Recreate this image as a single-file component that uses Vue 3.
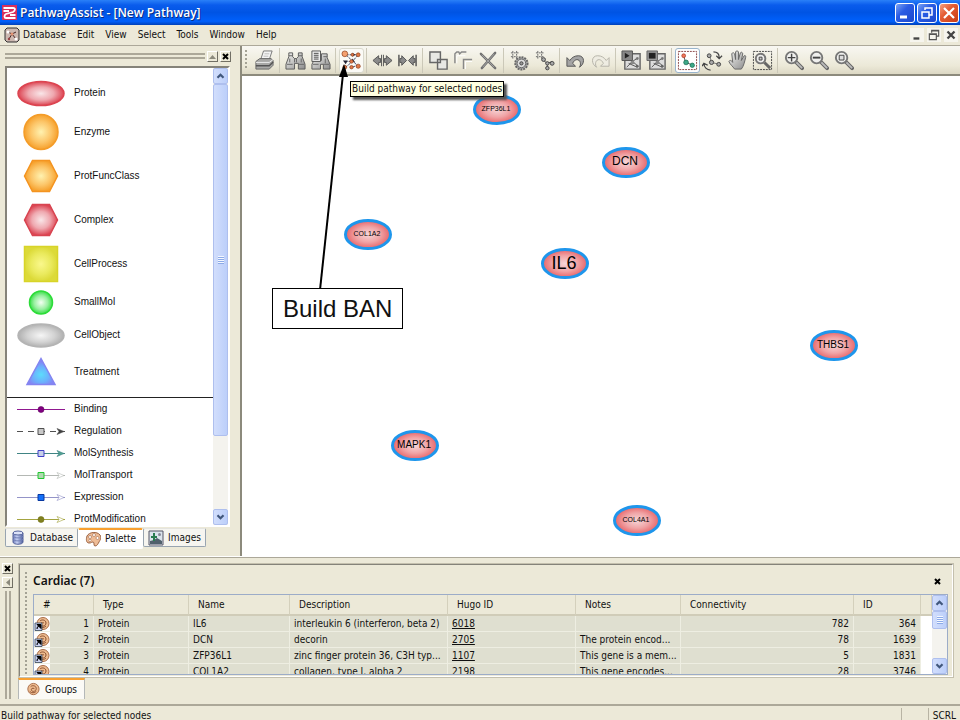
<template>
  <div class="window">
    <svg class="defs" width="0" height="0" aria-hidden="true">
      <defs>
        <radialGradient id="g-red"><stop offset="0" stop-color="#f9e6e8" /><stop offset=".55" stop-color="#efa9b0" /><stop offset="1" stop-color="#dc4452" /></radialGradient>
        <radialGradient id="g-node"><stop offset="0" stop-color="#f6d6d8" /><stop offset=".55" stop-color="#f0a4a6" /><stop offset="1" stop-color="#e86468" /></radialGradient>
        <radialGradient id="g-orange"><stop offset="0" stop-color="#fff2b0" /><stop offset=".6" stop-color="#fcc568" /><stop offset="1" stop-color="#f6a02c" /></radialGradient>
        <radialGradient id="g-yellow"><stop offset="0" stop-color="#faf88c" /><stop offset=".6" stop-color="#eaea5e" /><stop offset="1" stop-color="#dcda38" /></radialGradient>
        <radialGradient id="g-green"><stop offset="0" stop-color="#f4fff2" /><stop offset=".6" stop-color="#98f0a0" /><stop offset="1" stop-color="#3ade48" /></radialGradient>
        <radialGradient id="g-gray"><stop offset="0" stop-color="#f6f6f6" /><stop offset=".6" stop-color="#d2d2d2" /><stop offset="1" stop-color="#b0b0b0" /></radialGradient>
        <radialGradient id="g-blue" cy=".62"><stop offset="0" stop-color="#5cdcfc" /><stop offset=".6" stop-color="#6cb0fc" /><stop offset="1" stop-color="#8484f4" /></radialGradient>
        <linearGradient id="g-metal" x2="1" y2="1"><stop offset="0" stop-color="#f4f4f2" /><stop offset="1" stop-color="#8c8c8c" /></linearGradient>
        <linearGradient id="g-drum"><stop offset="0" stop-color="#6a78b8" /><stop offset=".4" stop-color="#c8d2f4" /><stop offset="1" stop-color="#4c5c9c" /></linearGradient>

        <symbol id="i-print" viewBox="0 0 22 22">
          <path d="M7 10 10 1h9l-3 9z" fill="#f4f4f4" stroke="#777" />
          <path d="M11 4h5M10 6.500h5" stroke="#bbb" />
          <path d="M2 12 6 9h12l2 2v5l-4 4H2z" fill="#a8a8a6" stroke="#666" />
          <path d="M2 13h14l4-3" fill="none" stroke="#eee" />
          <path d="M2 16.500h14l4-4" fill="none" stroke="#555" stroke-width="1.500" />
        </symbol>
        <symbol id="i-find" viewBox="0 0 22 22">
          <path d="M4 3h4v4l2 2h2l2-2V3h4v4l3 8v5h-7v-6h-4v6H1v-5l3-8z" fill="url(#g-metal)" stroke="#5a5a5a" />
          <path d="M4 6h4M14 6h4M2 15h6M14 15h6M10 9v4M12 9v4M5 9v4M17 9v4" stroke="#666" fill="none" />
        </symbol>
        <symbol id="i-findlist" viewBox="0 0 22 22">
          <path d="M12 4h6v4l3 7v5h-7v-5h-3v5H2v-5l2-4h8z" fill="url(#g-metal)" stroke="#5a5a5a" />
          <path d="M14 7h4M14 15h6M3 15h6M16 9v5" stroke="#666" />
          <path d="M2 1h9v11H2z" fill="#eee" stroke="#555" />
          <path d="M4 3.500h5M4 5.500h5M4 7.500h5M4 9.500h5" stroke="#444" />
        </symbol>
        <symbol id="i-build" viewBox="0 0 22 22">
          <path d="M5 5h12M5 5l12 11M18 5l-6 7-7 6M4 12h7M12 18l5-2" fill="none" stroke="#3c486c" stroke-dasharray="3 1" />
          <path d="m12 3 3 2-3 2zM12 9l3 4-4-1zM2 11h5l-2 4z" fill="#223" />
          <g fill="#e07848" stroke="#8a3c18" stroke-width=".7"><circle cx="4" cy="4" r="3" fill="#f4a070" /><circle cx="12" cy="5" r="1.500" /><circle cx="18" cy="5" r="2" /><circle cx="11" cy="12" r="1.800" /><circle cx="4" cy="18" r="2" /><circle cx="11" cy="18" r="1.800" /><circle cx="18" cy="17" r="2.200" /></g>
        </symbol>
        <symbol id="i-spread" viewBox="0 0 22 22">
          <path d="m1 11 6-5v3h2v4H7v3zM21 11l-6-5v3h-2v4h2v3z" fill="#8a8a8a" stroke="#555" />
          <path d="M10 5v12M12 5v12" stroke="#555" />
        </symbol>
        <symbol id="i-shrink" viewBox="0 0 22 22">
          <path d="M10 11 5 6v3H3v4h2v3zM12 11l5-5v3h2v4h-2v3z" fill="#8a8a8a" stroke="#555" />
          <path d="M2 5v12M20 5v12" stroke="#555" stroke-width="1.500" />
        </symbol>
        <symbol id="i-group" viewBox="0 0 22 22">
          <path d="M2 2h11v11H2zM10 10h10v10H10z" fill="#e8e8e4" stroke="#666" stroke-width="1.500" />
        </symbol>
        <symbol id="i-ungroup" viewBox="0 0 22 22">
          <path d="M2 14V4l2-2h2l1 2 2-2h5M11 20V10h9" fill="none" stroke="#888" stroke-width="1.500" />
          <path d="M4 14V6h9M13 20v-8h7" fill="none" stroke="#fff" />
        </symbol>
        <symbol id="i-delete" viewBox="0 0 22 22">
          <path d="M3 4 18 19M18 3 4 19" fill="none" stroke="#707070" stroke-width="2.500" stroke-linecap="round" /><path d="m4 5 13 13M17 4 5 18" stroke="#bbb" stroke-width=".7" />
        </symbol>
        <symbol id="i-gear" viewBox="0 0 22 22">
          <path d="M2 3h8M2 7h7M4 1v9M8 1v8" stroke="#666" stroke-dasharray="2 1" />
          <circle cx="13" cy="14" r="6.500" fill="#aaa" stroke="#666" stroke-width="2" stroke-dasharray="2 1" />
          <circle cx="13" cy="14" r="4.500" fill="#ddd" stroke="#666" /><circle cx="13" cy="14" r="1.700" fill="#999" stroke="#444" />
        </symbol>
        <symbol id="i-layout" viewBox="0 0 22 22">
          <path d="M2 3h8M2 7h8M4 1v8M8 1v8" stroke="#666" stroke-dasharray="2 1" />
          <path d="m10 11 4 3 5-2M14 14v5" stroke="#555" fill="none" />
          <g fill="#aaa" stroke="#444"><circle cx="10" cy="10" r="2" /><circle cx="14" cy="14" r="1.800" /><circle cx="19" cy="14" r="2" /><circle cx="14" cy="19" r="1.800" /></g>
        </symbol>
        <symbol id="i-undo" viewBox="0 0 22 22">
          <path d="M2 8v9h9l-3-3c2-5 7-5 8-1 .5 2 0 4-1 5 6-3 6-12-1-12-4 0-7 2-9 5z" fill="#a4a4a4" stroke="#555" />
        </symbol>
        <symbol id="i-redo" viewBox="0 0 22 22">
          <path d="M20 8v9h-9l3-3C12 9 7 9 6 13c-.5 2 0 4 1 5-6-3-6-12 1-12 4 0 7 2 9 5z" fill="#eeece2" stroke="#b4b2a8" />
        </symbol>
        <symbol id="i-play" viewBox="0 0 22 22">
          <path d="M4 4h16v16H4z" fill="#ddd" stroke="#666" stroke-width="1.500" />
          <path d="m6 18 6-6 6 5M12 12l6-4M8 14l9 4" stroke="#555" fill="none" /><circle cx="12" cy="13" r="2" fill="#888" /><circle cx="17" cy="17" r="1.500" fill="#666" /><circle cx="17" cy="9" r="1.500" fill="#777" />
          <path d="M1 1h11v10H1z" fill="#888" stroke="#555" /><path d="m4 3 5 3-5 3z" fill="#222" />
        </symbol>
        <symbol id="i-stop" viewBox="0 0 22 22">
          <path d="M4 4h16v16H4z" fill="#ddd" stroke="#666" stroke-width="1.500" />
          <path d="m6 18 6-6 6 5M12 12l6-4M8 14l9 4" stroke="#555" fill="none" /><circle cx="12" cy="13" r="2" fill="#888" /><circle cx="17" cy="17" r="1.500" fill="#666" /><circle cx="17" cy="9" r="1.500" fill="#777" />
          <path d="M1 1h11v10H1z" fill="#999" stroke="#666" /><path d="M3 3h7v6H3z" fill="#222" />
        </symbol>
        <symbol id="i-select" viewBox="0 0 22 22">
          <path d="M1.500 1.500h19v19h-19z" fill="#fff" stroke="#844" stroke-dasharray="2 1" />
          <path d="m7 6 2 7 8 3" fill="none" stroke="#555" />
          <circle cx="7" cy="6" r="2" fill="#f0785a" stroke="#a03020" stroke-width=".7" /><g fill="#3ca888" stroke="#14684c" stroke-width=".7"><circle cx="9.500" cy="13" r="2.500" /><circle cx="16" cy="16" r="2.300" /></g>
        </symbol>
        <symbol id="i-rotate" viewBox="0 0 22 22">
          <path d="M12 2c4 0 6 2 6 6M2 14c0 4 3 7 7 7M15 6l3 3 3-3M0 17l2-3 4 2" fill="none" stroke="#444" stroke-width="1.300" />
          <path d="m8 6 2 7 8 2" fill="none" stroke="#777" /><g fill="#aaa" stroke="#444"><circle cx="7.500" cy="6" r="2" /><circle cx="10" cy="13" r="2.200" /><circle cx="17.500" cy="15" r="2" /></g>
        </symbol>
        <symbol id="i-hand" viewBox="0 0 22 22">
          <path d="M8 20c-2-3-5-5-6-8 1-2 3-1 4 1L5 4c1-2 2-1 3 0l1 6V2c1-1.500 2-1.500 3 0v8l2-7c1-1 2-1 2.500 1L15 11l3-5c1-.5 2 0 1.500 2-1 4-2 9-4.500 12z" fill="url(#g-metal)" stroke="#666" />
        </symbol>
        <symbol id="i-zoomsel" viewBox="0 0 22 22">
          <path d="M1.500 1.500h19v19h-19z" fill="none" stroke="#444" stroke-dasharray="2 1" />
          <path d="m13 13 6 6" stroke="#666" stroke-width="3" /><circle cx="9" cy="9" r="5" fill="#eee" stroke="#777" stroke-width="2" /><path d="M7.500 7.500h3v3h-3z" fill="#ccc" stroke="#444" />
        </symbol>
        <symbol id="i-lens" viewBox="0 0 22 22">
          <path d="m14 13 6 6" stroke="#666" stroke-width="4" stroke-linecap="round" /><path d="m14 13 6 6" stroke="#bbb" stroke-width="2" />
          <circle cx="9" cy="8" r="6" fill="#f0f0ee" stroke="#777" stroke-width="2" />
        </symbol>
        <symbol id="i-zoomin" viewBox="0 0 22 22"><use href="#i-lens" /><path d="M5 8h8M9 4v8" stroke="#444" stroke-width="1.500" /></symbol>
        <symbol id="i-zoomout" viewBox="0 0 22 22"><use href="#i-lens" /><path d="M5 8h8" stroke="#444" stroke-width="2" /></symbol>
        <symbol id="i-fit" viewBox="0 0 22 22"><use href="#i-lens" /><path d="M6.500 5.500h5v5h-5z" fill="#ddd" stroke="#444" /></symbol>

        <symbol id="i-protein" viewBox="0 0 16 16">
          <circle cx="9" cy="7.500" r="6" fill="#eebc90" stroke="#a86c48" />
          <path d="M6 5c2-2 6-1 6 2s-4 4-5 2 1-3 3-2M5 10c2 2 5 2 7 0" fill="none" stroke="#8c5030" />
        </symbol>
        <symbol id="i-up" viewBox="0 0 15 15"><path d="m4 9.500 3.500-3.500L11 9.500" fill="none" stroke="#40577c" stroke-width="2.500" /></symbol>
        <symbol id="i-down" viewBox="0 0 15 15"><path d="m4 5.500 3.500 3.500L11 5.500" fill="none" stroke="#40577c" stroke-width="2.500" /></symbol>
      </defs>
    </svg>

    <header class="titlebar">
      <svg class="logo" width="17" height="17" viewBox="0 0 17 17">
        <path d="M1 1h15v15H1z" fill="#d8305c" />
        <path d="M2.500 4H12c3 0 2 3 0 4L5 10c-2 1-2 4 0 4h9.500M2.500 7H8M9 11h5.500" fill="none" stroke="#fff" stroke-width="1.800" />
      </svg>
      <h1>PathwayAssist - [New Pathway]</h1>
      <div class="caption-buttons">
        <button aria-label="Minimize"><svg viewBox="0 0 18 18"><path d="M4 13h7" stroke="#fff" stroke-width="3" /></svg></button>
        <button aria-label="Restore"><svg viewBox="0 0 18 18"><path d="M7 6V4h7v7h-3M4 8h7v6H4z" fill="none" stroke="#fff" stroke-width="1.500" /></svg></button>
        <button class="close" aria-label="Close"><svg viewBox="0 0 18 18"><path d="m4 4 10 10M14 4 4 14" stroke="#fff" stroke-width="2.200" /></svg></button>
      </div>
    </header>

    <nav class="menubar">
      <svg class="doc-icon" width="16" height="16" viewBox="0 0 16 16">
        <path d="M3 1h10l2 2v10l-2 2H3l-2-2V3z" fill="#ccb8b0" stroke="#333" />
        <path d="m4 5 4 2 4-2M8 7l-3 5M8 7l4 5" stroke="#422" fill="none" /><circle cx="4" cy="5" r="1.500" fill="#fff" /><circle cx="8" cy="7" r="1.500" fill="#e09070" /><circle cx="12" cy="12" r="1.500" fill="#fff" /><circle cx="5" cy="12" r="1.200" fill="#944" />
      </svg>
      <button v-for="m in menus" :key="m">{{ m }}</button>
      <div class="mdi-buttons">
        <button aria-label="Minimize document"><svg viewBox="0 0 12 12"><path d="M3 9h5" stroke="#444" stroke-width="2" /></svg></button>
        <button aria-label="Restore document"><svg viewBox="0 0 12 12"><path d="M4 4V2h6v5H8M2 5h6v5H2zM2 5.500h6M4 2.500h6" fill="none" stroke="#555" /></svg></button>
        <button aria-label="Close document"><svg viewBox="0 0 12 12"><path d="m3 3 6 6M9 3 3 9" stroke="#444" stroke-width="2" /></svg></button>
      </div>
    </nav>

    <div class="main">
      <aside class="side">
        <div class="dock-head">
          <div class="dock-lines"></div>
          <button class="dock-button" aria-label="Collapse"><svg viewBox="0 0 9 9"><path d="M1 7h7L4.500 3z" fill="#8c8a7c" /></svg></button>
          <button class="dock-button" aria-label="Close panel"><svg viewBox="0 0 9 9"><path d="m2 2 5 5M7 2 2 7" stroke="#000" stroke-width="2" /></svg></button>
        </div>
        <div class="palette">
          <div class="palette-list">
            <ul class="shapes">
              <li v-for="s in shapes" :key="s.name">
                <svg width="50" :height="s.height" :viewBox="`-25 ${-s.height / 2} 50 ${s.height}`">
                  <path :d="s.d" :fill="`url(#${s.fill})`" :stroke="s.stroke" stroke-width="1.500" />
                </svg>
                <span>{{ s.name }}</span>
              </li>
            </ul>
            <ul class="links">
              <li v-for="l in links" :key="l.name">
                <svg width="50" height="12" viewBox="-25 -6 50 12">
                  <path d="M-24 .5H24" :stroke="l.line" :stroke-dasharray="l.dash" />
                  <path v-if="l.arrow" d="m16-2.500 7 3-7 3 2-3z" :fill="l.arrow" :stroke="l.line" stroke-width=".6" />
                  <circle v-if="l.round" cy=".5" r="3" :fill="l.fill" :stroke="l.border" stroke-width=".6" />
                  <path v-else d="M-3-2.500h6v6h-6z" :fill="l.fill" :stroke="l.border" />
                </svg>
                <span>{{ l.name }}</span>
              </li>
            </ul>
          </div>
          <div class="scrollbar">
            <button aria-label="Scroll up"><svg><use href="#i-up" /></svg></button>
            <div class="thumb tall"><i class="ridges"></i></div>
            <div class="track"></div>
            <button aria-label="Scroll down"><svg><use href="#i-down" /></svg></button>
          </div>
        </div>
        <div class="side-tabs">
          <button>
            <svg width="16" height="17" viewBox="0 0 16 17"><path d="M3 4v9c0 3 10 3 10 0V4z" fill="url(#g-drum)" stroke="#56649c" /><ellipse cx="8" cy="4" rx="5" ry="2" fill="#dce2f8" stroke="#56649c" /><path d="M3 7c0 2.500 10 2.500 10 0M3 10c0 2.500 10 2.500 10 0" fill="none" stroke="#7482b8" /></svg>
            Database
          </button>
          <button class="current">
            <svg width="16" height="16" viewBox="0 0 16 16"><path d="M2 5c2-4 10-5 13-1 2 3 0 5-1 7s-2 4-4 4 0-4-2-4-1 1-4 1-3-4-2-7z" fill="#eebc96" stroke="#9c6444" /><g fill="#fff" stroke="#a06848" stroke-width=".6"><circle cx="5" cy="6" r="1.500" /><circle cx="9" cy="4" r="1.500" /><circle cx="12.500" cy="7" r="1.500" /><circle cx="5" cy="9.500" r="1.200" /></g></svg>
            Palette
          </button>
          <button>
            <svg width="16" height="16" viewBox="0 0 16 16"><path d="M1 1h14v14H1z" fill="#dce4ec" stroke="#556" /><path d="M2 14v-3l4-1 3-2 5 3v3z" fill="#50606c" /><path d="M5 3h2v8H5zM3 6h6v2H3z" fill="#2a7c50" /><circle cx="11.500" cy="4.500" r="1.500" fill="#889" /></svg>
            Images
          </button>
        </div>
      </aside>

      <section class="work">
        <div class="toolbar">
          <i class="grip"></i>
          <div v-for="(group, i) in tools" :key="i" class="tool-group">
            <button
              v-for="t in group"
              :key="t.icon"
              :class="{ hot: t.icon === 'build', on: t.icon === 'select' }"
              :aria-label="t.label"
            >
              <svg width="21" height="21"><use :href="`#i-${t.icon}`" /></svg>
            </button>
          </div>
        </div>
        <div class="canvas">
          <svg
            v-for="n in nodes"
            :key="n.name"
            class="node"
            :style="{ left: n.x + 'px', top: n.y + 'px' }"
            viewBox="0 0 48 31"
          >
            <ellipse cx="24" cy="15.500" rx="22.500" ry="14" fill="url(#g-node)" stroke="#1e96ec" stroke-width="3" />
            <text x="23" :y="14 + n.size * 0.37" :font-size="n.size" text-anchor="middle">{{ n.name }}</text>
          </svg>
        </div>
        <div class="tooltip" role="tooltip">Build pathway for selected nodes</div>
        <svg class="arrow" width="40" height="232" viewBox="0 0 40 232">
          <path d="M8 230 31 14" stroke="#000" stroke-width="2" />
          <path d="m32 4 4 13h-9z" />
        </svg>
        <div class="callout">Build BAN</div>
      </section>
    </div>

    <section class="bottom">
      <div class="bottom-head">
        <button class="dock-button" aria-label="Close panel"><svg viewBox="0 0 9 9"><path d="m2 2 5 5M7 2 2 7" stroke="#000" stroke-width="2" /></svg></button>
        <button class="dock-button" aria-label="Collapse"><svg viewBox="0 0 9 9"><path d="M7 1v7L3 4.500z" fill="#8c8a7c" /></svg></button>
        <div class="dock-lines"></div>
      </div>
      <div class="bottom-body">
        <div class="group-frame">
          <i class="grip"></i>
          <div class="group-content">
            <div class="group-title">
              <h2>Cardiac (7)</h2>
              <button aria-label="Close group"><svg width="9" height="9" viewBox="0 0 9 9"><path d="m2 2 5 5M7 2 2 7" stroke="#000" stroke-width="2" /></svg></button>
            </div>
            <div class="grid">
              <div class="grid-scroll">
                <table>
                  <colgroup>
                    <col v-for="c in columns" :key="c.name" :style="{ width: c.width + 'px' }">
                    <col>
                  </colgroup>
                  <thead>
                    <tr>
                      <th v-for="c in columns" :key="c.name">{{ c.name }}</th>
                      <th></th>
                    </tr>
                  </thead>
                  <tbody>
                    <tr v-for="(r, i) in rows" :key="r[1]">
                      <td class="num">
                        <div class="num-box">
                          <svg width="16" height="15" viewBox="0 0 16 15">
                            <use href="#i-protein" width="16" height="16" />
                            <path d="M1 7h7v7.500H1z" fill="#c8d0f0" stroke="#345" stroke-width=".8" /><path d="M3 13c0-2 1-3 2-3M3 8.500h4v4z" fill="#000" stroke="#000" />
                          </svg>
                          {{ i + 1 }}
                        </div>
                      </td>
                      <td>{{ r[0] }}</td>
                      <td>{{ r[1] }}</td>
                      <td>{{ r[2] }}</td>
                      <td><a href="#">{{ r[3] }}</a></td>
                      <td>{{ r[4] }}</td>
                      <td class="right">{{ r[5] }}</td>
                      <td class="right">{{ r[6] }}</td>
                      <td class="blank"></td>
                    </tr>
                  </tbody>
                </table>
              </div>
              <div class="scrollbar">
                <button aria-label="Scroll up"><svg><use href="#i-up" /></svg></button>
                <div class="thumb"><i class="ridges"></i></div>
                <div class="track"></div>
                <button aria-label="Scroll down"><svg><use href="#i-down" /></svg></button>
              </div>
            </div>
          </div>
        </div>
        <button class="group-tab">
          <svg width="15" height="15"><use href="#i-protein" /></svg>
          Groups
        </button>
      </div>
    </section>

    <footer class="status">
      <span class="message">Build pathway for selected nodes</span>
      <span class="cell"></span>
      <span class="cell">SCRL</span>
    </footer>
  </div>
</template>

<script setup>
import { ref } from 'vue'

const menus = ['Database', 'Edit', 'View', 'Select', 'Tools', 'Window', 'Help']

const hexagon = 'M-16.500 0-8.500-15.500h17L16.500 0l-8 15.500h-17z'

// palette entries, paths are centred on 0,0
const shapes = [
  { name: 'Protein', height: 33, fill: 'g-red', stroke: '#dc4450', d: 'M-23 0a23 12 0 0 1 46 0a23 12 0 0 1-46 0z' },
  { name: 'Enzyme', height: 44, fill: 'g-orange', stroke: '#f49c28', d: 'M-17 0a17 17.500 0 0 1 34 0a17 17.500 0 0 1-34 0z' },
  { name: 'ProtFuncClass', height: 44, fill: 'g-orange', stroke: '#f49420', d: hexagon },
  { name: 'Complex', height: 44, fill: 'g-red', stroke: '#d84450', d: hexagon },
  { name: 'CellProcess', height: 44, fill: 'g-yellow', stroke: '#d8d428', d: 'M-16.500-17.500h33v35h-33z' },
  { name: 'SmallMol', height: 33, fill: 'g-green', stroke: '#2cdc38', d: 'M-11.500 0a11.500 11.500 0 0 1 23 0a11.500 11.500 0 0 1-23 0z' },
  { name: 'CellObject', height: 33, fill: 'g-gray', stroke: '#b4b4b4', d: 'M-23 0a23 11.500 0 0 1 46 0a23 11.500 0 0 1-46 0z' },
  { name: 'Treatment', height: 40, fill: 'g-blue', stroke: '#8484f0', d: 'M0-13.500 14 12.500h-28z' }
]

const links = [
  { name: 'Binding', line: '#901890', border: '#600060', fill: '#800080', round: true },
  { name: 'Regulation', line: '#505050', border: '#505050', fill: '#c8c8c8', arrow: '#404040', dash: '6 5' },
  { name: 'MolSynthesis', line: '#408484', border: '#4040c8', fill: '#c8d0e8', arrow: '#50a090' },
  { name: 'MolTransport', line: '#b4b8b4', border: '#20c830', fill: '#b0d8b0', arrow: '#ffffff' },
  { name: 'Expression', line: '#9494c8', border: '#0838a0', fill: '#1470f8', arrow: '#ffffff' },
  { name: 'ProtModification', line: '#a4a440', border: '#707010', fill: '#808020', arrow: '#ffffff', round: true }
]

const tools = [
  [{ icon: 'print', label: 'Print' }],
  [{ icon: 'find', label: 'Find' }, { icon: 'findlist', label: 'Find in list' }],
  [{ icon: 'build', label: 'Build pathway' }],
  [{ icon: 'spread', label: 'Expand' }, { icon: 'shrink', label: 'Contract' }],
  [{ icon: 'group', label: 'Group' }, { icon: 'ungroup', label: 'Ungroup' }, { icon: 'delete', label: 'Delete' }],
  [{ icon: 'gear', label: 'Filter' }, { icon: 'layout', label: 'Layout' }],
  [{ icon: 'undo', label: 'Undo' }, { icon: 'redo', label: 'Redo' }],
  [{ icon: 'play', label: 'Start layout' }, { icon: 'stop', label: 'Stop layout' }],
  [{ icon: 'select', label: 'Select' }, { icon: 'rotate', label: 'Rotate' }, { icon: 'hand', label: 'Pan' }, { icon: 'zoomsel', label: 'Zoom to area' }],
  [{ icon: 'zoomin', label: 'Zoom in' }, { icon: 'zoomout', label: 'Zoom out' }, { icon: 'fit', label: 'Fit' }]
]

const nodes = ref([
  { name: 'ZFP36L1', x: 231, y: 18, size: 7 },
  { name: 'DCN', x: 360, y: 71, size: 12 },
  { name: 'COL1A2', x: 102, y: 143, size: 7 },
  { name: 'IL6', x: 299, y: 172, size: 18 },
  { name: 'THBS1', x: 568, y: 254, size: 10 },
  { name: 'MAPK1', x: 149, y: 354, size: 10 },
  { name: 'COL4A1', x: 371, y: 429, size: 7 }
])

const columns = [
  { name: '#', width: 60 },
  { name: 'Type', width: 95 },
  { name: 'Name', width: 101 },
  { name: 'Description', width: 158 },
  { name: 'Hugo ID', width: 128 },
  { name: 'Notes', width: 105 },
  { name: 'Connectivity', width: 173 },
  { name: 'ID', width: 67 }
]

const rows = ref([
  ['Protein', 'IL6', 'interleukin 6 (interferon, beta 2)', '6018', '', 782, 364],
  ['Protein', 'DCN', 'decorin', '2705', 'The protein encod...', 78, 1639],
  ['Protein', 'ZFP36L1', 'zinc finger protein 36, C3H typ...', '1107', 'This gene is a mem...', 5, 1831],
  ['Protein', 'COL1A2', 'collagen, type I, alpha 2', '2198', 'This gene encodes...', 28, 3746]
])
</script>

<style>
body {
  margin: 0;
  overflow: hidden;
}
</style>

<style scoped>
* {
  box-sizing: border-box;
}

.window {
  display: flex;
  flex-direction: column;
  height: 100vh;
  overflow: hidden;
  background: #ece9d8;
  color: #111;
  font: 10px/14px "DejaVu Sans Condensed", "Noto Sans", sans-serif;
}

.defs {
  position: absolute;
}

button {
  padding: 0;
  border: 0;
  background: none;
  color: inherit;
  font: inherit;
}

svg {
  display: block;
  flex: none;
}

ul {
  margin: 0;
  padding: 0;
  list-style: none;
}

/* title bar */
.titlebar {
  display: flex;
  align-items: center;
  gap: 2px;
  flex: none;
  height: 25px;
  padding: 0 1px;
  background: linear-gradient(#2a80f8, #0a5cec 20%, #0054e4 50%, #0060fc 85%, #0040b8);
}

.titlebar h1 {
  flex: 1;
  margin: 0;
  color: #fff;
  font: 600 12px/20px "Open Sans", sans-serif;
  text-shadow: 1px 1px #0a2c80;
}

.caption-buttons {
  display: flex;
  gap: 2px;
}

.caption-buttons button {
  width: 20px;
  height: 20px;
  border: 1px solid #fff;
  border-radius: 3px;
  background: linear-gradient(135deg, #7ca4f4, #2a5ce4 40%, #1c48cc);
}

.caption-buttons .close {
  background: linear-gradient(135deg, #f4a080, #e45c34 40%, #c83c14);
}

/* menu */
.menubar {
  display: flex;
  align-items: center;
  gap: 11px;
  flex: none;
  height: 20px;
  padding: 0 2px 0 4px;
}

.doc-icon {
  margin-right: -8px;
}

.mdi-buttons {
  display: flex;
  gap: 3px;
  margin-left: auto;
}

.mdi-buttons button {
  width: 14px;
  height: 14px;
  background: #f6f5ee;
}

/* middle area */
.main {
  display: flex;
  flex: 1;
  min-height: 0;
  border-top: 1px solid #aca899;
  border-bottom: 1px solid #fff;
}

.side {
  display: flex;
  flex-direction: column;
  flex: none;
  width: 242px;
  padding: 0 10px 6px 5px;
  border-right: 2px solid #8c8a7c;
}

.dock-head {
  display: flex;
  align-items: center;
  gap: 2px;
  height: 20px;
  margin-right: -1px;
}

.dock-head .dock-lines {
  flex: 1;
  height: 6px;
  border: solid #aca899;
  border-width: 2px 0;
}

.dock-button {
  flex: none;
  width: 11px;
  height: 11px;
  border: 1px solid;
  border-color: #fff #716f64 #716f64 #fff;
}

.dock-button svg {
  width: 9px;
  height: 9px;
}

.palette {
  display: flex;
  flex: 1;
  min-height: 0;
  border: 2px solid;
  border-color: #85837a #fff #fff #85837a;
  background: #fff;
}

.palette-list {
  flex: 1;
  overflow: hidden;
  font: 10px/14px "Liberation Sans", Arial, sans-serif;
}

.shapes {
  padding: 9px 0 5px;
  border-bottom: 1px solid #222;
}

.palette-list li {
  display: flex;
  align-items: center;
  gap: 8px;
  padding-left: 9px;
}

.shapes span {
  padding-bottom: 1px;
}

.links li {
  height: 22px;
}

/* scroll bars */
.scrollbar {
  display: flex;
  flex-direction: column;
  flex: none;
  width: 15px;
  background: #f4f3ee;
}

.scrollbar button,
.thumb {
  flex: none;
  height: 16px;
  border: 1px solid #aebfee;
  border-radius: 2px;
  background: linear-gradient(90deg, #d2defc, #bccffa);
}

.scrollbar svg {
  width: 13px;
  height: 14px;
}

.thumb {
  display: flex;
  align-items: center;
  justify-content: center;
  height: 18px;
}

.thumb.tall {
  height: 77%;
}

.ridges {
  width: 6px;
  height: 8px;
  background: repeating-linear-gradient(#f4f8ff 0 1px, #8caae8 1px 2px);
}

.track {
  flex: 1;
}

/* tabs below the palette */
.side-tabs {
  display: flex;
  flex: none;
  height: 23px;
  padding-top: 1px;
}

.side-tabs button {
  display: flex;
  align-items: center;
  gap: 4px;
  height: 19px;
  padding: 0 4px;
  border: 1px solid #98a4b0;
  border-top-color: #e4e4e0;
  border-radius: 2px;
  background: #f6f5f0;
}

.side-tabs .current {
  height: 21px;
  padding: 0 6px;
  border-color: #fff;
  border-top: 2px solid #f8a030;
  background: #fff;
}

/* toolbar and drawing area */
.work {
  position: relative;
  display: flex;
  flex-direction: column;
  flex: 1;
  min-width: 0;
}

.toolbar {
  display: flex;
  align-items: center;
  flex: none;
  height: 30px;
  padding-left: 3px;
  border-bottom: 2px solid #8c8a7c;
  background: linear-gradient(#f8f7f2, #ece9d8 70%, #dcd8c4);
}

.grip {
  flex: none;
  width: 2px;
  background: repeating-linear-gradient(#a4a294 0 2px, transparent 2px 4px);
}

.toolbar .grip {
  height: 20px;
  margin-right: 5px;
}

.tool-group {
  display: flex;
}

.tool-group + .tool-group {
  padding-left: 3px;
  margin-left: 2px;
  border-left: 1px solid #cbc8b8;
}

.tool-group button {
  display: flex;
  align-items: center;
  justify-content: center;
  width: 25px;
  height: 25px;
  border: 1px solid transparent;
  border-radius: 3px;
}

.tool-group .hot {
  border-color: #d8d8cc;
  background: #fbfaf6;
}

.tool-group .on {
  border-color: #98b4cc;
  background: #fff;
}

.canvas {
  position: relative;
  flex: 1;
  overflow: hidden;
  background: #fff;
}

.node {
  position: absolute;
  width: 48px;
  height: 31px;
  font-family: "Liberation Sans", Arial, sans-serif;
}

.tooltip {
  position: absolute;
  top: 35px;
  left: 108px;
  height: 16px;
  padding: 0 1px;
  border: 1px solid #000;
  background: #ffffe1;
  box-shadow: 3px 3px 2px #555;
  white-space: nowrap;
}

.arrow {
  position: absolute;
  top: 14px;
  left: 70px;
}

.callout {
  position: absolute;
  top: 242px;
  left: 30px;
  padding: 0 10px;
  border: 1px solid #000;
  background: #fff;
  font: 24px/39px "Liberation Sans", Arial, sans-serif;
  white-space: nowrap;
}

/* groups panel */
.bottom {
  display: flex;
  flex: none;
  height: 149px;
  padding: 5px 6px 5px 2px;
  border-top: 1px solid #aca899;
  border-bottom: 2px solid #aca899;
}

.bottom-head {
  display: flex;
  flex-direction: column;
  gap: 3px;
  flex: none;
  width: 16px;
}

.bottom-head .dock-lines {
  flex: 1;
  width: 6px;
  margin-left: 3px;
  border: solid #aca899;
  border-width: 0 2px;
}

.bottom-body {
  display: flex;
  flex-direction: column;
  align-items: flex-start;
  flex: 1;
  min-width: 0;
}

.group-frame {
  display: flex;
  gap: 6px;
  flex: 1;
  align-self: stretch;
  min-height: 0;
  padding: 1px 4px 1px 5px;
  border: 2px solid;
  border-color: #85837a #fff #fff #85837a;
  outline: 1px solid #c4c0ae;
  outline-offset: -1px;
}

.group-frame .grip {
  margin-top: 6px;
}

.group-content {
  display: flex;
  flex-direction: column;
  flex: 1;
  min-width: 0;
}

.group-title {
  display: flex;
  align-items: center;
  justify-content: space-between;
  height: 28px;
  padding: 2px 6px 0 0;
}

.group-title h2 {
  margin: 0;
  font: 600 12px/16px "Noto Sans", sans-serif;
}

.grid {
  display: flex;
  flex: 1;
  min-height: 0;
  border: 1px solid #9cacc8;
  background: #fff;
}

.grid-scroll {
  flex: 1;
  min-width: 0;
  overflow: hidden;
}

table {
  width: 100%;
  border-spacing: 0;
  table-layout: fixed;
}

th {
  height: 21px;
  padding: 1px 9px 0;
  border-right: 1px solid #d4d0bc;
  border-bottom: 2px solid #d0ccb8;
  background: #ece9d8;
  font-weight: normal;
  text-align: left;
}

td {
  height: 16px;
  padding: 0 4px;
  border: solid #eeeee2;
  border-width: 0 1px 1px 0;
  background: #dfdfd0;
  line-height: 15px;
  white-space: nowrap;
}

td a {
  color: inherit;
}

td.num {
  padding-left: 0;
}

.num-box {
  display: flex;
  justify-content: space-between;
}

td.num svg {
  background: #fff;
}

td.right {
  text-align: right;
}

td.blank {
  border: 0;
  background: #fff;
}

.group-tab {
  display: flex;
  align-items: center;
  gap: 5px;
  flex: none;
  height: 21px;
  padding: 0 7px 0 6px;
  border: 1px solid #b4b8b8;
  border-top: 2px solid #f8a030;
  border-bottom: 0;
  background: #fbfaf6;
}

/* status bar */
.status {
  display: flex;
  flex: none;
  height: 14px;
  padding: 2px 0 0 1px;
  overflow: hidden;
  line-height: 16px;
}

.message {
  flex: 1;
}

.cell {
  min-width: 27px;
  padding: 0 4px;
  border-left: 1px solid #b8b4a4;
}
</style>
